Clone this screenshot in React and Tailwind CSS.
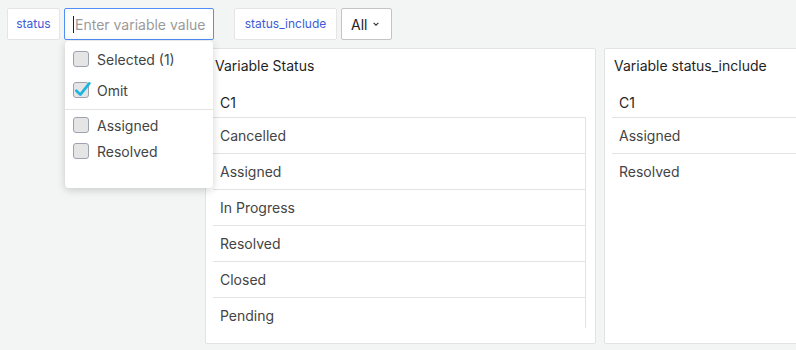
import React from 'react';

const statusRows = ['Cancelled', 'Assigned', 'In Progress', 'Resolved', 'Closed', 'Pending'];
const includeRows = ['Assigned', 'Resolved'];

function Checkbox({ checked }) {
  return (
    <span className="relative inline-block w-4 h-4 shrink-0 rounded-[3px] border border-[#9ca3af] bg-[#e5e5e5]">
      {checked && (
        <svg viewBox="0 0 16 16" className="absolute -left-[1px] -top-[3px] w-[18px] h-[18px]">
          <path d="M3 9.5 L6.5 13 L14.5 3" fill="none" stroke="#1cb5e0" strokeWidth="2.4" strokeLinecap="round" strokeLinejoin="round" />
        </svg>
      )}
    </span>
  );
}

function Option({ label, checked }) {
  return (
    <label className="flex items-center gap-[8px] px-[8px] h-[26px] text-[14px] text-[#444]">
      <Checkbox checked={checked} />
      <span>{label}</span>
    </label>
  );
}

function VariablePanel({ title, rows, className }) {
  return (
    <div className={'bg-white border border-[#e3e3e3] rounded-[2px] pt-[8px] ' + className}>
      <div className="px-[9px] text-[14px] text-[#1f1f1f] h-[18px] leading-[18px]">{title}</div>
      <div className="pl-[7px] pr-[9px] mt-[13px]">
        <div className="h-[29px] pl-[7px] text-[14px] text-[#1f1f1f] flex items-center">C1</div>
        <div className="h-[211px] overflow-hidden border-r border-[#e3e3e3]">
          {rows.map((r) => (
            <div key={r} className="h-[36px] border-t border-[#e3e3e3] pl-[7px] flex items-center text-[14px] text-[#444]">
              {r}
            </div>
          ))}
        </div>
      </div>
    </div>
  );
}

export default function App() {
  return (
    <div className="w-[796px] h-[350px] bg-[#f3f4f4] overflow-hidden relative" style={{ fontFamily: 'Inter, "Noto Sans", sans-serif' }}>
      {/* Variable bar */}
      <div className="flex items-center pt-[8px] pl-[7px]">
        <div className="h-[32px] w-[53px] flex items-center justify-center bg-white border border-[#e5e5e5] rounded-[2px] text-[12px] text-[#3d5bd9]">
          status
        </div>
        <div className="relative ml-[4px]">
          <div className="w-[150px] h-[32px] bg-white border border-[#4f8ff7] rounded-[2px] flex items-center pl-[8px] text-[14px] text-[#9a9a9a]">
            <span className="w-px h-[17px] bg-[#222] mr-[1px]" />
            Enter variable value
          </div>
          {/* dropdown */}
          <div className="absolute left-[1px] top-[33px] w-[148px] h-[147px] bg-white rounded-[4px] shadow-[0_2px_8px_rgba(0,0,0,0.18)] z-10 pt-[5px]">
            <Option label="Selected (1)" />
            <div className="mt-[5px]">
              <Option label="Omit" checked />
            </div>
            <div className="border-t border-[#e3e3e3] mt-[6px] mb-[2px]" />
            <Option label="Assigned" />
            <Option label="Resolved" />
          </div>
        </div>
        <div className="ml-[20px] h-[32px] w-[103px] flex items-center justify-center bg-white border border-[#e5e5e5] rounded-[2px] text-[12px] text-[#3d5bd9]">
          status_include
        </div>
        <div className="ml-[4px] h-[32px] w-[51px] px-[9px] flex items-center gap-[5px] bg-white border border-[#c4c4c4] rounded-[2px] text-[14px] text-[#222]">
          All
          <svg viewBox="0 0 10 10" className="w-[8px] h-[8px]">
            <path d="M2 3.5 L5 6.5 L8 3.5" fill="none" stroke="#333" strokeWidth="1.5" />
          </svg>
        </div>
      </div>

      {/* Panels */}
      <div className="flex gap-[8px] pl-[205px] mt-[8px]">
        <VariablePanel title="Variable Status" rows={statusRows} className="w-[391px] h-[296px] shrink-0" />
        <VariablePanel title="Variable status_include" rows={includeRows} className="w-[300px] h-[296px] shrink-0" />
      </div>
    </div>
  );
}
